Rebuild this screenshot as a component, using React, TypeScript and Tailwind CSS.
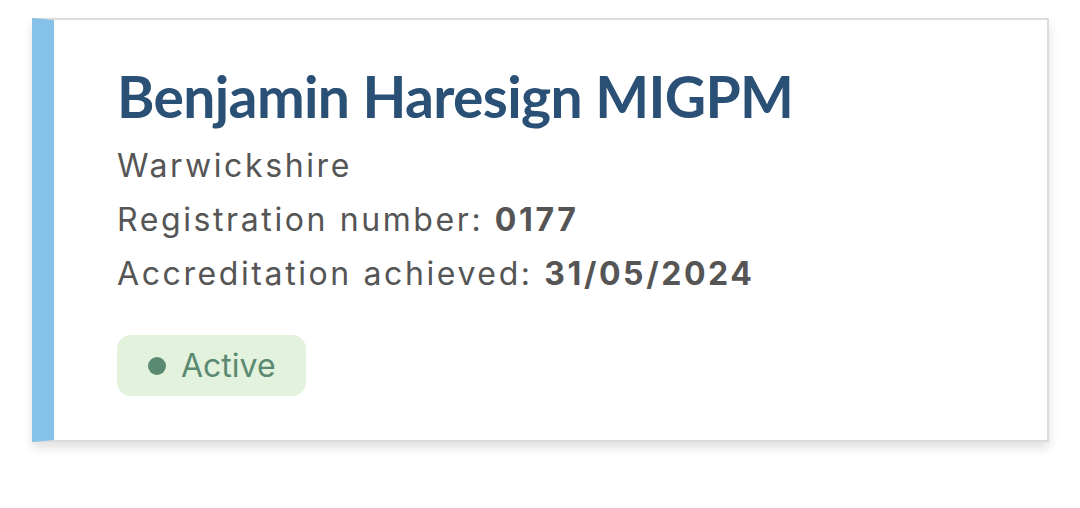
export default function App() {
  return (
    <div className="w-[1080px] h-[508px] bg-white" style={{ fontFamily: 'Inter, "Noto Sans", sans-serif' }}>
      <div className="pt-[18px] pl-[32px]">
        <div className="w-[1017px] h-[424px] border-2 border-[#dcdcdc] border-l-[22px] border-l-[#85c1e9] bg-white shadow-[0_6px_10px_rgba(0,0,0,0.12)] pl-[63px] pt-[42px]">
          <h1 className="text-[57px] leading-[68px] font-bold text-[#2a5075] tracking-[-0.65px]" style={{ fontFamily: 'Lato, Inter, sans-serif' }}>
            Benjamin Haresign MIGPM
          </h1>
          <div className="mt-[9px] text-[32px] leading-[54px] text-[#555555] tracking-[2.6px]">
            <div>Warwickshire</div>
            <div>
              Registration number: <span className="font-bold">0177</span>
            </div>
            <div>
              Accreditation achieved: <span className="font-bold">31/05/2024</span>
            </div>
          </div>
          <div className="mt-[34px] inline-flex items-center h-[61px] rounded-[14px] bg-[#e3f2dc] pl-[31px] pr-[30px] gap-[15px]">
            <span className="w-[18px] h-[18px] rounded-full bg-[#5a8a72]" />
            <span className="text-[32px] text-[#5b8a73]">Active</span>
          </div>
        </div>
      </div>
    </div>
  );
}
